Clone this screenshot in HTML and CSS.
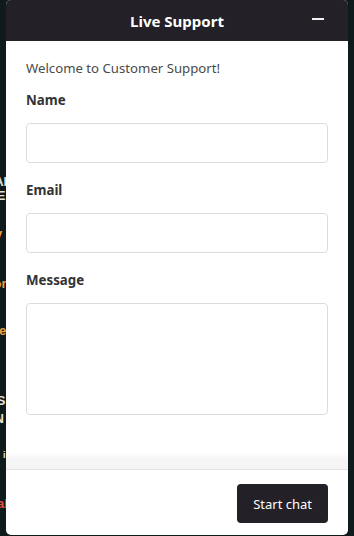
FILE: index.html
```html
<!DOCTYPE html>
<html lang="en">
<head>
<meta charset="utf-8">
<title>Live Support</title>
<link rel="stylesheet" href="styles.css">
</head>
<body>
<div class="page">
  <div class="bg-line bg-w l1">RADAR</div>
  <div class="bg-line bg-w l2">ACE</div>
  <div class="bg-line bg-o l3">Privacy</div>
  <div class="bg-line bg-o l4">Information</div>
  <div class="bg-line bg-o l5">Home</div>
  <div class="bg-line bg-w l6">SUPPORTS</div>
  <div class="bg-line bg-w l7">OPTION</div>
  <div class="bg-line bg-w l8">i</div>
  <div class="bg-line bg-r l9">Legal</div>
</div>
<aside class="widget">
  <header class="widget-head">
    <h1 class="widget-title">Live Support</h1>
    <button class="minimize" aria-label="Minimize"><span class="bar"></span></button>
  </header>
  <form class="widget-body">
    <p class="welcome">Welcome to Customer Support!</p>
    <label class="field-label" for="name">Name</label>
    <input class="field" id="name" type="text">
    <label class="field-label" for="email">Email</label>
    <input class="field" id="email" type="email">
    <label class="field-label" for="msg">Message</label>
    <textarea class="field area" id="msg"></textarea>
  </form>
  <div class="fade"></div>
  <footer class="widget-foot">
    <button class="start" type="button">Start chat</button>
  </footer>
</aside>
</body>
</html>
```
FILE: styles.css
```css
html, body {
  margin: 0;
  padding: 0;
  height: 100%;
}
body {
  background: #0e1a1c;
  font-family: "Noto Sans", "Open Sans", sans-serif;
  overflow: hidden;
  position: relative;
}
.page {
  position: absolute;
  inset: 0;
}
.bg-line {
  position: absolute;
  font-weight: 700;
  font-size: 13px;
  white-space: nowrap;
  font-family: "Liberation Sans", sans-serif;
}
.bg-w { color: #e8e2d6; }
.bg-o { color: #e9a13b; }
.bg-r { color: #e0503a; }
.l1 { top: 174px; left: -34px; }
.l2 { top: 188px; left: -22px; }
.l3 { top: 226px; left: -44px; }
.l4 { top: 276px; left: -62px; }
.l5 { top: 323px; left: -30px; }
.l6 { top: 393px; left: -66px; }
.l7 { top: 411px; left: -46px; }
.l8 { top: 450px; left: 3px; font-size: 9px; }
.l9 { top: 496px; left: -26px; }

.widget {
  position: absolute;
  top: 0;
  left: 6px;
  width: 342px;
  height: 535px;
  background: #ffffff;
  border-radius: 5px;
  overflow: hidden;
  display: flex;
  flex-direction: column;
}
.widget-head {
  height: 41px;
  flex: none;
  background: #232127;
  display: flex;
  align-items: center;
  justify-content: center;
  position: relative;
}
.widget-title {
  margin: 0;
  color: #ffffff;
  font-size: 15px;
  font-weight: 700;
}
.minimize {
  position: absolute;
  right: 22px;
  top: 11px;
  width: 16px;
  height: 16px;
  padding: 0;
  border: 0;
  background: transparent;
  display: flex;
  align-items: center;
  justify-content: center;
  cursor: pointer;
}
.minimize .bar {
  display: block;
  width: 12px;
  height: 2px;
  background: #f2f2f2;
}
.widget-body {
  flex: 1;
  padding: 17px 20px 0;
  display: flex;
  flex-direction: column;
}
.welcome {
  margin: 0;
  font-size: 13.2px;
  line-height: 20px;
  color: #4a4a4a;
}
.field-label {
  display: block;
  margin-top: 12px;
  font-size: 13.3px;
  line-height: 20px;
  font-weight: 700;
  color: #333333;
}
.field {
  display: block;
  box-sizing: border-box;
  margin-top: 13px;
  width: 302px;
  height: 40px;
  border: 1px solid #dcdcdc;
  border-radius: 4px;
  background: #fff;
  font: inherit;
  padding: 8px 10px;
}
.field + .field-label { margin-top: 17px; }
.area {
  height: 112px;
  resize: none;
}
.fade {
  flex: none;
  height: 17px;
  background: linear-gradient(#ffffff, #f6f6f6 40%, #f5f5f5);
  border-bottom: 1px solid #e4e4e4;
}
.widget-foot {
  flex: none;
  height: 65px;
  display: flex;
  align-items: flex-start;
  justify-content: flex-end;
  padding: 14px 20px 0;
  box-sizing: border-box;
}
.start {
  height: 39px;
  padding: 0 16px;
  border: 0;
  border-radius: 4px;
  background: #232127;
  color: #ffffff;
  font: inherit;
  font-size: 13px;
  cursor: pointer;
}
```
